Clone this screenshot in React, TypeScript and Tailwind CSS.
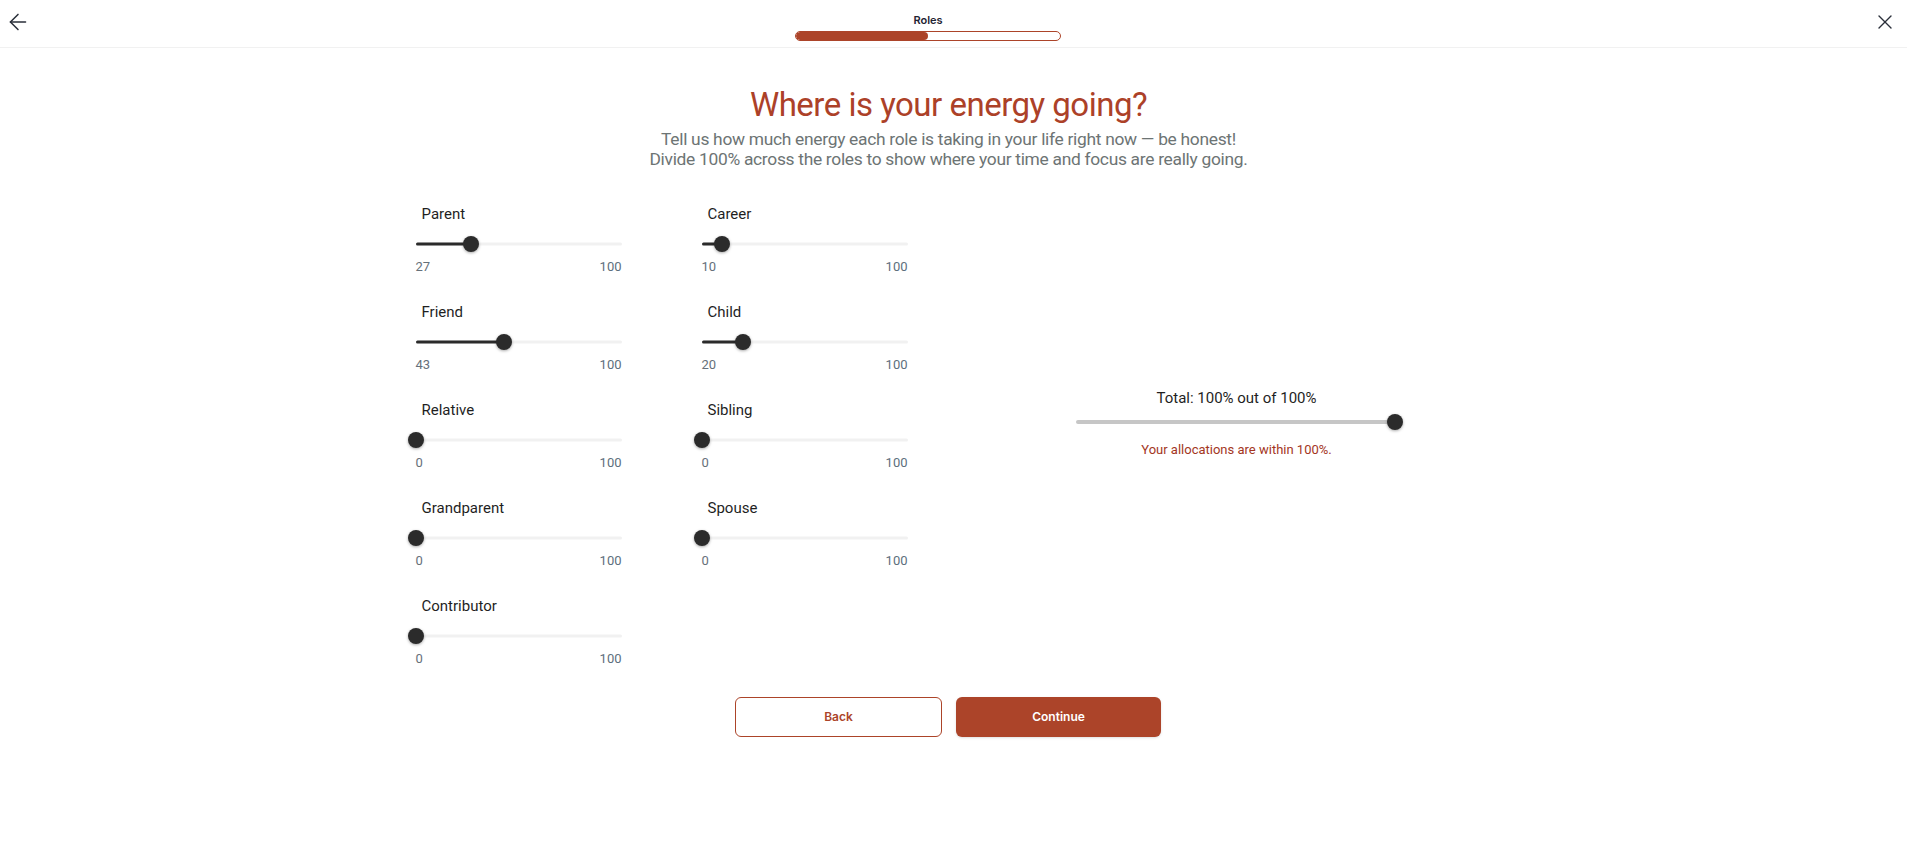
import { ArrowLeft, X } from 'lucide-react';

type Role = { name: string; value: number };

const leftRoles: Role[] = [
  { name: 'Parent', value: 27 },
  { name: 'Friend', value: 43 },
  { name: 'Relative', value: 0 },
  { name: 'Grandparent', value: 0 },
  { name: 'Contributor', value: 0 },
];

const rightRoles: Role[] = [
  { name: 'Career', value: 10 },
  { name: 'Child', value: 20 },
  { name: 'Sibling', value: 0 },
  { name: 'Spouse', value: 0 },
];

function RoleSlider({ role }: { role: Role }) {
  return (
    <div className="w-[206px]">
      <div className="pl-1.5 text-[15px] leading-5 text-[#1f1f1f]">{role.name}</div>
      <div className="relative mt-3 h-4">
        <div className="absolute left-0 right-0 top-1/2 h-[3px] -translate-y-1/2 rounded-full bg-[#f1f1f1]" />
        <div
          className="absolute left-0 top-1/2 h-[3px] -translate-y-1/2 rounded-full bg-[#2b2b2b]"
          style={{ width: `${role.value}%` }}
        />
        <div
          className="absolute top-0 h-4 w-4 -translate-x-1/2 rounded-full bg-[#2b2b2b] shadow-[0_1px_3px_rgba(0,0,0,0.35)]"
          style={{ left: `${role.value}%` }}
        />
      </div>
      <div className="mt-1.5 flex justify-between text-[13px] leading-[18px] text-[#5d6f7d]">
        <span className="text-[#66707a]">{role.value}</span>
        <span>100</span>
      </div>
    </div>
  );
}

export default function App() {
  return (
    <div className="min-h-screen bg-white font-['Roboto',sans-serif]">
      {/* top bar */}
      <div className="relative flex h-12 items-start justify-between border-b border-[#f1f1f1] pl-[5px] pr-2.5">
        <button className="mt-[9px] text-[#2a2f3a]">
          <ArrowLeft size={26} strokeWidth={1.4} />
        </button>
        <div className="absolute left-[795px] top-3 flex w-[266px] flex-col items-center">
          <div className="font-['Inter',sans-serif] text-[11px] font-semibold leading-4 text-[#1f2433]">Roles</div>
          <div className="mt-[3px] h-[10px] w-[266px] overflow-hidden rounded-full border border-[#ac4429]">
            <div className="h-full w-1/2 rounded-full bg-[#ac4429]" />
          </div>
        </div>
        <button className="mt-[10px] text-[#2a2f3a]">
          <X size={24} strokeWidth={1.4} />
        </button>
      </div>

      <div className="pr-[10px] pt-[39px] text-center">
        <h1 className="text-[33px] leading-9 tracking-[-0.5px] text-[#ac4128]">Where is your energy going?</h1>
        <p className="mt-[6px] text-[17.4px] leading-5 tracking-[-0.3px] text-[#6d7474]">
          Tell us how much energy each role is taking in your life right now — be honest!
          <br />
          Divide 100% across the roles to show where your time and focus are really going.
        </p>
      </div>

      <div className="mx-auto mt-[35px] grid w-[1132px] grid-cols-2">
        <div className="flex gap-[80px] pl-[28px]">
          <div className="flex flex-col gap-[26px]">
            {leftRoles.map((r) => (
              <RoleSlider key={r.name} role={r} />
            ))}
          </div>
          <div className="flex flex-col gap-[26px]">
            {rightRoles.map((r) => (
              <RoleSlider key={r.name} role={r} />
            ))}
          </div>
        </div>

        <div className="flex flex-col items-center pt-[183px]">
          <div className="text-[15px] leading-[22px] text-[#1f1f1f]">Total: 100% out of 100%</div>
          <div className="relative mt-[5px] h-4 w-[322px]">
            <div className="absolute left-0 right-0 top-1/2 h-1 -translate-y-1/2 rounded-full bg-[#c6c6c6]" />
            <div className="absolute right-[-5px] top-0 h-4 w-4 rounded-full bg-[#2b2b2b] shadow-[0_1px_3px_rgba(0,0,0,0.35)]" />
          </div>
          <div className="mt-[11px] text-[13px] leading-[18px] text-[#a3361e]">Your allocations are within 100%.</div>
        </div>
      </div>

      <div className="mt-[29px] flex justify-center gap-[14px] pr-[11px]">
        <button className="h-10 w-[207px] rounded-md border border-[#ac4429] bg-white font-['Inter',sans-serif] text-[12px] font-semibold text-[#ac4429]">
          Back
        </button>
        <button className="h-10 w-[205px] rounded-md bg-[#ac4429] font-['Inter',sans-serif] text-[12px] font-semibold text-white shadow-sm">
          Continue
        </button>
      </div>
    </div>
  );
}
